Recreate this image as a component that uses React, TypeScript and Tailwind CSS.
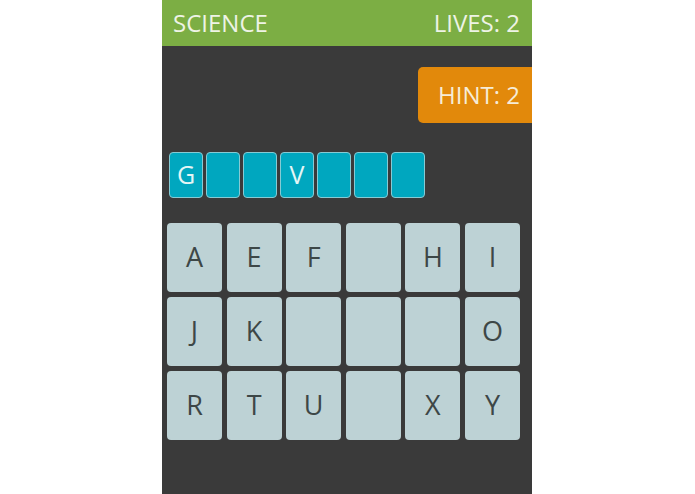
import React from 'react';

const answer = ['G', '', '', 'V', '', '', ''];

const keys = ['A', 'E', 'F', '', 'H', 'I', 'J', 'K', '', '', '', 'O', 'R', 'T', 'U', '', 'X', 'Y'];

export default function App() {
  return (
    <div className="min-h-screen bg-white" style={{ fontFamily: '"Open Sans", "Noto Sans", sans-serif' }}>
      <div className="ml-[162px] w-[370px] h-[494px] bg-[#3a3a3a] flex flex-col">
        {/* Header */}
        <div className="h-[46px] bg-[#7cae44] flex items-center justify-between pl-[11px] pr-[12px] text-[24px] text-[#eef3e6]">
          <span>SCIENCE</span>
          <span>LIVES: 2</span>
        </div>

        {/* Hint */}
        <div className="flex justify-end mt-[21px]">
          <button className="w-[114px] h-[56px] bg-[#e2890b] rounded-l-[5px] flex items-center justify-end pr-[12px] text-[24px] text-[#f6ecd8]">
            HINT: 2
          </button>
        </div>

        {/* Answer slots */}
        <div className="flex gap-[3px] pl-[7px] mt-[29px]">
          {answer.map((c, i) => (
            <div
              key={i}
              className="w-[34px] h-[46px] rounded-[4px] bg-[#00a7bf] border border-[#86cbd4] flex items-center justify-center text-[25px] text-[#e4f6f6]"
            >
              {c}
            </div>
          ))}
        </div>

        {/* Keyboard */}
        <div className="grid grid-cols-[repeat(6,55px)] gap-x-[4.6px] gap-y-[5px] pl-[5px] mt-[25px]">
          {keys.map((k, i) => (
            <div
              key={i}
              className="h-[69px] rounded-[4px] bg-[#bdd2d5] flex items-center justify-center text-[27px] text-[#3d4747]"
            >
              {k}
            </div>
          ))}
        </div>
      </div>
    </div>
  );
}
